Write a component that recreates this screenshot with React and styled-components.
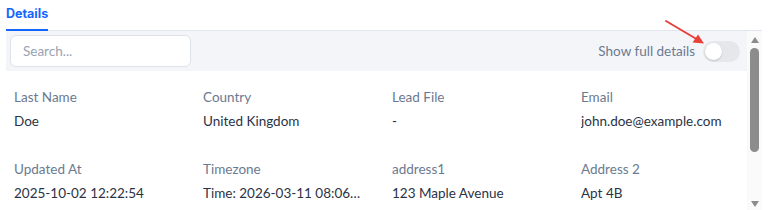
import React from "react";
import styled, { createGlobalStyle } from "styled-components";

const GlobalStyle = createGlobalStyle`
  html, body {
    margin: 0;
    padding: 0;
    background: #fff;
  }
  #root {
    width: 769px;
    height: 210px;
    overflow: hidden;
  }
`;

const fields = [
  { label: "Last Name", value: "Doe" },
  { label: "Country", value: "United Kingdom" },
  { label: "Lead File", value: "-" },
  { label: "Email", value: "john.doe@example.com" },
  { label: "Updated At", value: "2025-10-02 12:22:54" },
  { label: "Timezone", value: "Time: 2026-03-11 08:06:14 (GMT+0)" },
  { label: "address1", value: "123 Maple Avenue" },
  { label: "Address 2", value: "Apt 4B" },
];

const App = () => {
  return (
    <>
      <GlobalStyle />
      <Page>
        <Tabs>
          <Tab active>Details</Tab>
        </Tabs>
        <Body>
          <Scroller>
            <Toolbar>
              <SearchInput placeholder="Search..." />
              <ToggleRow>
                <ToggleLabel>Show full details</ToggleLabel>
                <Switch>
                  <Knob />
                </Switch>
              </ToggleRow>
            </Toolbar>
            <Grid>
              {fields.map((f) => (
                <Field key={f.label}>
                  <Label>{f.label}</Label>
                  <Value title={f.value}>{f.value}</Value>
                </Field>
              ))}
            </Grid>
          </Scroller>
          <ScrollTrack>
            <ScrollButton h={17}>
              <svg width="8" height="6" viewBox="0 0 8 6">
                <path d="M4 0 L8 6 L0 6 Z" fill="#8c8c8c" />
              </svg>
            </ScrollButton>
            <Thumb />
            <Spacer />
            <ScrollButton h={12}>
              <svg width="8" height="6" viewBox="0 0 8 6">
                <path d="M0 0 L8 0 L4 6 Z" fill="#8c8c8c" />
              </svg>
            </ScrollButton>
          </ScrollTrack>
        </Body>
        <Arrow width="44" height="30" viewBox="0 0 44 30">
          <line x1="2" y1="2" x2="35" y2="21.5" stroke="#e8413a" strokeWidth="2" strokeLinecap="round" />
          <path d="M40 24.5 L28.5 23.5 L34 15.5 Z" fill="#e8413a" />
        </Arrow>
      </Page>
    </>
  );
};

const Page = styled.div`
  position: relative;
  padding: 0 7px 0 6px;
  font-family: "Lato", "Liberation Sans", sans-serif;
`;

const Tabs = styled.div`
  display: flex;
  border-bottom: 1px solid #e2e6ee;
`;

const Tab = styled.div`
  font-family: "Inter", "Liberation Sans", sans-serif;
  font-weight: 700;
  font-size: 12.5px;
  color: ${(p) => (p.active ? "#1565ff" : "#6b7a90")};
  padding: 6px 0 7px;
  border-bottom: 2px solid ${(p) => (p.active ? "#1565ff" : "transparent")};
  margin-bottom: -1px;
  line-height: 16px;
`;

const Body = styled.div`
  display: flex;
  height: 179px;
`;

const Scroller = styled.div`
  flex: 1;
  min-width: 0;
  overflow: hidden;
`;

const ScrollTrack = styled.div`
  width: 15px;
  flex-shrink: 0;
  background: #fafafa;
  display: flex;
  flex-direction: column;
  align-items: center;
`;

const ScrollButton = styled.div`
  height: ${(p) => p.h}px;
  width: 15px;
  display: flex;
  align-items: center;
  justify-content: center;
  flex-shrink: 0;
`;

const Thumb = styled.div`
  width: 9px;
  height: 104px;
  border-radius: 4.5px;
  background: #8c8c8c;
  flex-shrink: 0;
`;

const Spacer = styled.div`
  flex: 1;
`;

const Toolbar = styled.div`
  display: flex;
  align-items: center;
  justify-content: space-between;
  background: #f4f5f9;
  padding: 4px 7px 4px 4px;
`;

const SearchInput = styled.input`
  width: 181px;
  height: 32px;
  box-sizing: border-box;
  border: 1px solid #dde1e9;
  border-radius: 6px;
  background: #fff;
  padding: 0 12px;
  font-family: inherit;
  font-size: 13.5px;
  color: #2a3345;
  outline: none;
  &::placeholder {
    color: #9aa3b2;
  }
`;

const ToggleRow = styled.div`
  display: flex;
  align-items: center;
  gap: 8px;
`;

const ToggleLabel = styled.span`
  font-size: 13.5px;
  color: #6b7a90;
`;

const Switch = styled.div`
  width: 37px;
  height: 21px;
  border-radius: 11px;
  background: #e6e7eb;
  display: flex;
  align-items: center;
  padding: 0 2px;
  box-sizing: border-box;
`;

const Knob = styled.div`
  width: 17px;
  height: 17px;
  border-radius: 50%;
  background: #fff;
  box-shadow: 0 1px 2px rgba(0, 0, 0, 0.15);
`;

const Grid = styled.div`
  display: grid;
  grid-template-columns: repeat(4, 1fr);
  column-gap: 31px;
  row-gap: 28px;
  padding: 16px 8px 0;
`;

const Field = styled.div`
  display: flex;
  flex-direction: column;
  gap: 4px;
  min-width: 0;
`;

const Label = styled.div`
  font-size: 13.5px;
  line-height: 20px;
  color: #6b7a90;
`;

const Value = styled.div`
  font-size: 13.5px;
  line-height: 20px;
  color: #2a3345;
  white-space: nowrap;
  overflow: hidden;
  text-overflow: ellipsis;
`;

const Arrow = styled.svg`
  position: absolute;
  left: 664px;
  top: 19px;
`;

export default App;
